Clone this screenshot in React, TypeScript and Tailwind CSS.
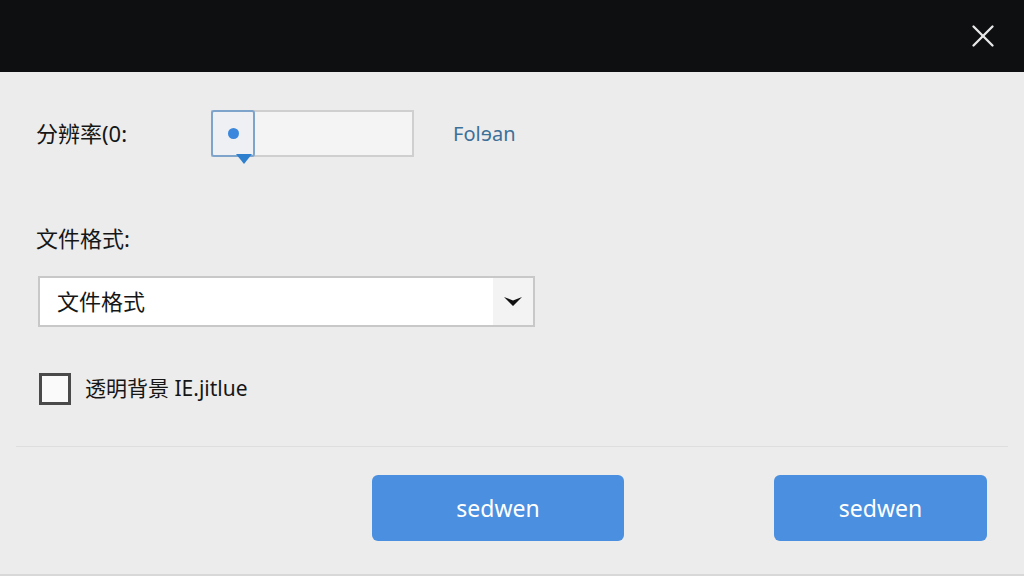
import { X } from "lucide-react";

const font = { fontFamily: '"Noto Sans", "Noto Sans CJK SC", sans-serif' };

const ExportDialog = () => {
  return (
    <div className="w-[1024px] h-[576px] bg-[#ececec] flex flex-col overflow-hidden" style={font}>
      <div className="h-[72px] shrink-0 bg-[#0e0f11] flex items-center justify-end pr-[22px]">
        <button className="text-[#e8e8e8]">
          <X size={38} strokeWidth={1.5} />
        </button>
      </div>

      <div className="flex-1 flex flex-col border-b-2 border-[#d8d8d8]">
        <div className="mt-[38px] flex items-center pl-[36px]">
          <span className="w-[175px] text-[22px] text-[#161616]">分辨率(0:</span>
          <div className="relative flex h-[47px] w-[203px] bg-[#f4f4f4] border-2 border-[#cfcfcf]">
            <div className="relative -ml-[2px] -my-[2px] w-[44px] h-[47px] border-2 border-[#7ea4cc] rounded-[3px] bg-[#eef0f3] flex items-center justify-center">
              <span className="w-[11px] h-[11px] rounded-full bg-[#3b87dd]" />
              <span className="absolute -bottom-[9px] right-[1px] w-0 h-0 border-l-[8px] border-r-[8px] border-t-[10px] border-l-transparent border-r-transparent border-t-[#2f7fcf]" />
            </div>
          </div>
          <a className="ml-[39px] text-[20px] text-[#3d7099]">Folɘan</a>
        </div>

        <div className="mt-[66px] pl-[36px] text-[22px] leading-[30px] text-[#161616]">文件格式:</div>

        <div className="mt-[23px] ml-[38px] w-[497px] h-[51px] flex bg-white border-2 border-[#c8c8c8]">
          <span className="flex-1 flex items-center pl-[17px] text-[22px] text-[#161616]">文件格式</span>
          <span className="w-[40px] flex items-center justify-center bg-[#f3f3f3]">
            {/* solid arrowhead chevron */}
            <svg width="20" height="11" viewBox="0 0 20 11">
              <path d="M1 1 L10 10 L19 1 L10 4.5 Z" fill="#111111" />
            </svg>
          </span>
        </div>

        <label className="mt-[46px] ml-[39px] flex items-center gap-[14px]">
          <span className="w-[32px] h-[32px] border-[3px] border-[#4a4a4a] bg-[#fafafa]" />
          <span className="text-[21px] text-[#161616]">透明背景 IE.jitlue</span>
        </label>

        <div className="mt-[41px] mx-[16px] h-px bg-[#dedede]" />

        <div className="mt-[28px] flex justify-end gap-[150px] pr-[37px]">
          <button className="w-[252px] h-[66px] rounded-[6px] bg-[#4a8fe0] text-white text-[23px]">sedwen</button>
          <button className="w-[213px] h-[66px] rounded-[6px] bg-[#4a8fe0] text-white text-[23px]">sedwen</button>
        </div>
      </div>
    </div>
  );
};

export default function App() {
  return <ExportDialog />;
}
